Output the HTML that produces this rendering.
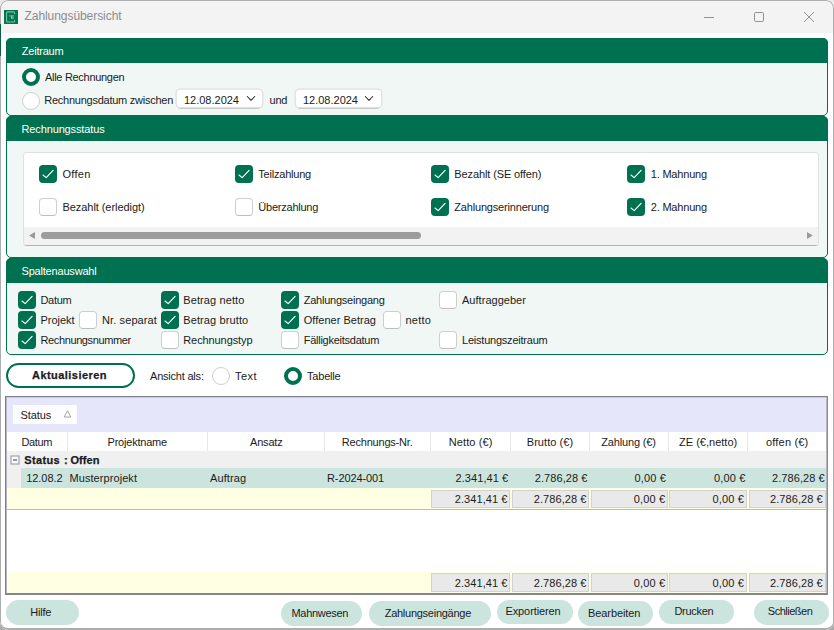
<!DOCTYPE html>
<html lang="de"><head><meta charset="utf-8"><title>Zahlungsübersicht</title>
<style>
html,body{margin:0;padding:0}
body{width:834px;height:630px;overflow:hidden;background:linear-gradient(#e9e9e9 0,#e9e9e9 50%,#a9a9a9 50%,#a9a9a9 100%);position:relative;font-family:"Liberation Sans", sans-serif;color:#1b1b1b}
#w{position:absolute;left:0;top:0;width:834px;height:630px;overflow:hidden;background:#fff;border-radius:8px}
#w div,#w .a,#w .t{position:absolute}
.t{white-space:pre}
.b{-webkit-text-stroke:0.25px #1b1b1b}
.cb{box-sizing:border-box;border:1px solid #cfcfcf;border-bottom-color:#bdbdbd;border-radius:4px;background:#fff}
.cb.on{border:none;background:#007150}
.cb svg{position:absolute;left:0;top:0}
.rd{box-sizing:border-box;border:1px solid #cfcfcf;border-radius:50%;background:#fff}
.rd.on{border:4px solid #007150}
#frame{left:0;top:0;width:834px;height:630px;box-sizing:border-box;border:1px solid #adadad;border-bottom-width:2px;border-radius:8px;pointer-events:none}
</style></head>
<body>
<div id="w">
<div style="left:0px;top:0px;width:834px;height:33px;background:#f3f3f3"></div>
<svg class="a" style="left:4px;top:10px" width="14" height="14" viewBox="0 0 14 14"><rect width="14" height="14" fill="#00774f"/><path d="M10.6 4.2 V2.9 Q10.6 1.9 9.6 1.9 H3.6 Q2.6 1.9 2.6 2.9 V11 Q2.6 12 3.6 12 H9.6 Q10.6 12 10.6 11 V10" fill="none" stroke="#ffffff" stroke-opacity="0.5" stroke-width="1.1"/><path d="M5.2 5.9 H10 M7.8 5.9 V9.2 M7.2 7.9 H10.2" fill="none" stroke="#ffffff" stroke-opacity="0.6" stroke-width="0.9"/></svg>
<svg class="a" style="left:700px;top:8px" width="120" height="18" viewBox="0 0 120 18"><path d="M4 9.5 H14" stroke="#929292" stroke-width="1" fill="none"/><rect x="54.5" y="4.5" width="9" height="9" rx="1.3" fill="none" stroke="#929292" stroke-width="1"/><path d="M104 4 L114 14 M114 4 L104 14" stroke="#929292" stroke-width="1" fill="none"/></svg>
<div style="left:6px;top:38px;width:822px;height:78px;background:#f0f7f5;border:1px solid #007150;border-radius:5px;box-sizing:border-box"></div><div style="left:6px;top:38px;width:822px;height:25px;background:#007150;border-radius:5px 5px 0 0"></div>
<div style="left:6px;top:116px;width:822px;height:142px;background:#f0f7f5;border:1px solid #007150;border-radius:5px;box-sizing:border-box"></div><div style="left:6px;top:116px;width:822px;height:25px;background:#007150;border-radius:5px 5px 0 0"></div>
<div style="left:6px;top:258px;width:822px;height:97px;background:#f0f7f5;border:1px solid #007150;border-radius:5px;box-sizing:border-box"></div><div style="left:6px;top:258px;width:822px;height:25px;background:#007150;border-radius:5px 5px 0 0"></div>
<div class="rd on" style="left:22px;top:68px;width:18px;height:18px;"></div>
<div class="rd" style="left:22px;top:92px;width:18px;height:18px;"></div>
<svg class="a" style="left:173px;top:86px" width="93" height="26" viewBox="0 0 93 26"><rect x="3.10" y="3.1" width="86.70" height="19" rx="4" fill="#fff" stroke="#d6dad9" stroke-width="1"/><path d="M6.60 22.2 H86.30" stroke="#b9bcbb" stroke-width="0.9" fill="none"/></svg>
<svg class="a" style="left:292px;top:86px" width="93" height="26" viewBox="0 0 93 26"><rect x="3.20" y="3.1" width="86.60" height="19" rx="4" fill="#fff" stroke="#d6dad9" stroke-width="1"/><path d="M6.70 22.2 H86.30" stroke="#b9bcbb" stroke-width="0.9" fill="none"/></svg>
<svg class="a" style="left:245.5px;top:95px" width="10" height="7" viewBox="0 0 10 7"><path d="M1.3 1.5 L5 5.3 L8.7 1.5" fill="none" stroke="#2b2b2b" stroke-width="1.05" stroke-linecap="round" stroke-linejoin="round"/></svg>
<svg class="a" style="left:364px;top:95px" width="10" height="7" viewBox="0 0 10 7"><path d="M1.3 1.5 L5 5.3 L8.7 1.5" fill="none" stroke="#2b2b2b" stroke-width="1.05" stroke-linecap="round" stroke-linejoin="round"/></svg>
<div style="left:23px;top:152px;width:796px;height:94px;background:#fff;border:1px solid #dde2e0;border-bottom-color:#b4b4b4;border-radius:4px;box-sizing:border-box"></div>
<div style="left:24px;top:227px;width:794px;height:18px;background:#f2f2f2;border-radius:0 0 3px 3px"></div>
<div style="left:41px;top:232px;width:380px;height:7px;background:#9c9c9c;border-radius:4px"></div>
<svg class="a" style="left:28px;top:231px" width="8" height="9" viewBox="0 0 8 9"><path d="M7 1 V8 L1.2 4.5 Z" fill="#9a9a9a"/></svg>
<svg class="a" style="left:805.5px;top:231px" width="8" height="9" viewBox="0 0 8 9"><path d="M1 1 V8 L6.8 4.5 Z" fill="#9a9a9a"/></svg>
<div class="cb on" style="left:39px;top:165px;width:18px;height:18px;"><svg width="18" height="18" viewBox="0 0 18 18"><path d="M4 10 L7.2 12.6 L14.1 5.4" fill="none" stroke="#fff" stroke-width="1.15" stroke-linecap="round" stroke-linejoin="round"/></svg></div>
<div class="cb" style="left:39px;top:198px;width:18px;height:18px;"></div>
<div class="cb on" style="left:235px;top:165px;width:18px;height:18px;"><svg width="18" height="18" viewBox="0 0 18 18"><path d="M4 10 L7.2 12.6 L14.1 5.4" fill="none" stroke="#fff" stroke-width="1.15" stroke-linecap="round" stroke-linejoin="round"/></svg></div>
<div class="cb" style="left:235px;top:198px;width:18px;height:18px;"></div>
<div class="cb on" style="left:431px;top:165px;width:18px;height:18px;"><svg width="18" height="18" viewBox="0 0 18 18"><path d="M4 10 L7.2 12.6 L14.1 5.4" fill="none" stroke="#fff" stroke-width="1.15" stroke-linecap="round" stroke-linejoin="round"/></svg></div>
<div class="cb on" style="left:431px;top:198px;width:18px;height:18px;"><svg width="18" height="18" viewBox="0 0 18 18"><path d="M4 10 L7.2 12.6 L14.1 5.4" fill="none" stroke="#fff" stroke-width="1.15" stroke-linecap="round" stroke-linejoin="round"/></svg></div>
<div class="cb on" style="left:627px;top:165px;width:18px;height:18px;"><svg width="18" height="18" viewBox="0 0 18 18"><path d="M4 10 L7.2 12.6 L14.1 5.4" fill="none" stroke="#fff" stroke-width="1.15" stroke-linecap="round" stroke-linejoin="round"/></svg></div>
<div class="cb on" style="left:627px;top:198px;width:18px;height:18px;"><svg width="18" height="18" viewBox="0 0 18 18"><path d="M4 10 L7.2 12.6 L14.1 5.4" fill="none" stroke="#fff" stroke-width="1.15" stroke-linecap="round" stroke-linejoin="round"/></svg></div>
<div class="cb on" style="left:18px;top:291px;width:18px;height:18px;"><svg width="18" height="18" viewBox="0 0 18 18"><path d="M4 10 L7.2 12.6 L14.1 5.4" fill="none" stroke="#fff" stroke-width="1.15" stroke-linecap="round" stroke-linejoin="round"/></svg></div>
<div class="cb on" style="left:161px;top:291px;width:18px;height:18px;"><svg width="18" height="18" viewBox="0 0 18 18"><path d="M4 10 L7.2 12.6 L14.1 5.4" fill="none" stroke="#fff" stroke-width="1.15" stroke-linecap="round" stroke-linejoin="round"/></svg></div>
<div class="cb on" style="left:281px;top:291px;width:18px;height:18px;"><svg width="18" height="18" viewBox="0 0 18 18"><path d="M4 10 L7.2 12.6 L14.1 5.4" fill="none" stroke="#fff" stroke-width="1.15" stroke-linecap="round" stroke-linejoin="round"/></svg></div>
<div class="cb" style="left:439px;top:291px;width:18px;height:18px;"></div>
<div class="cb on" style="left:18px;top:311px;width:18px;height:18px;"><svg width="18" height="18" viewBox="0 0 18 18"><path d="M4 10 L7.2 12.6 L14.1 5.4" fill="none" stroke="#fff" stroke-width="1.15" stroke-linecap="round" stroke-linejoin="round"/></svg></div>
<div class="cb on" style="left:161px;top:311px;width:18px;height:18px;"><svg width="18" height="18" viewBox="0 0 18 18"><path d="M4 10 L7.2 12.6 L14.1 5.4" fill="none" stroke="#fff" stroke-width="1.15" stroke-linecap="round" stroke-linejoin="round"/></svg></div>
<div class="cb on" style="left:281px;top:311px;width:18px;height:18px;"><svg width="18" height="18" viewBox="0 0 18 18"><path d="M4 10 L7.2 12.6 L14.1 5.4" fill="none" stroke="#fff" stroke-width="1.15" stroke-linecap="round" stroke-linejoin="round"/></svg></div>
<div class="cb on" style="left:18px;top:331px;width:18px;height:18px;"><svg width="18" height="18" viewBox="0 0 18 18"><path d="M4 10 L7.2 12.6 L14.1 5.4" fill="none" stroke="#fff" stroke-width="1.15" stroke-linecap="round" stroke-linejoin="round"/></svg></div>
<div class="cb" style="left:161px;top:331px;width:18px;height:18px;"></div>
<div class="cb" style="left:281px;top:331px;width:18px;height:18px;"></div>
<div class="cb" style="left:439px;top:331px;width:18px;height:18px;"></div>
<div class="cb" style="left:79px;top:311px;width:18px;height:18px;"></div>
<div class="cb" style="left:383px;top:311px;width:18px;height:18px;"></div>
<div style="left:6px;top:363px;width:129px;height:25px;background:#fff;border:2px solid #007150;border-radius:13px;box-sizing:border-box"></div>
<div class="rd" style="left:212px;top:367px;width:18px;height:18px;"></div>
<div class="rd on" style="left:284px;top:367px;width:18px;height:18px;"></div>
<div style="left:5px;top:396px;width:823px;height:199px;background:#fff"></div>
<div style="left:5px;top:396px;width:823px;height:1px;background:#82828c"></div>
<div style="left:7px;top:397px;width:819px;height:1px;background:#c9c9dc"></div>
<div style="left:5px;top:396px;width:1px;height:199px;background:#7d7d88"></div>
<div style="left:6px;top:397px;width:1px;height:196px;background:#b8b8c6"></div>
<div style="left:5px;top:593px;width:823px;height:2px;background:#85858f"></div>
<div style="left:826px;top:397px;width:1px;height:196px;background:#b4b4bd"></div>
<div style="left:827px;top:396px;width:1px;height:199px;background:#8a8a94"></div>
<div style="left:7px;top:397.5px;width:819px;height:34.5px;background:#e6e6fa"></div>
<div style="left:13px;top:405px;width:64px;height:19px;background:#fdfdff"></div>
<svg class="a" style="left:63px;top:410px" width="9" height="8" viewBox="0 0 9 8"><path d="M4.5 0.8 L7.8 7 H1.2 Z" fill="none" stroke="#9a9a9a" stroke-width="0.9"/></svg>
<div style="left:67.0px;top:432px;width:1.0px;height:19px;background:#e8e8e8"></div>
<div style="left:206.5px;top:432px;width:1.0px;height:19px;background:#e8e8e8"></div>
<div style="left:324.0px;top:432px;width:1.0px;height:19px;background:#e8e8e8"></div>
<div style="left:430.25px;top:432px;width:1.0px;height:19px;background:#e8e8e8"></div>
<div style="left:510.25px;top:432px;width:1.0px;height:19px;background:#e8e8e8"></div>
<div style="left:589.0px;top:432px;width:1.0px;height:19px;background:#e8e8e8"></div>
<div style="left:668.0px;top:432px;width:1.0px;height:19px;background:#e8e8e8"></div>
<div style="left:747.25px;top:432px;width:1.0px;height:19px;background:#e8e8e8"></div>
<div style="left:7px;top:451px;width:819px;height:17px;background:#f0f0f0"></div>
<div style="left:7px;top:468px;width:14px;height:20px;background:#f0f0f0"></div>
<svg class="a" style="left:10px;top:455px" width="10" height="10" viewBox="0 0 10 10"><rect x="1" y="1" width="8" height="8" fill="#fbfbfd" stroke="#8f8fa6" stroke-width="1"/><path d="M3 5 H7" stroke="#2c2c8c" stroke-width="1"/></svg>
<div style="left:21px;top:468px;width:805px;height:20px;background:#cce4de"></div>
<div style="left:7px;top:488px;width:819px;height:21px;background:#ffffe3"></div>
<div style="left:431px;top:489.5px;width:79px;height:18.5px;background:#e9e9e9;border:1px solid #d2d2d2;box-sizing:border-box"></div>
<div style="left:511.5px;top:489.5px;width:77.5px;height:18.5px;background:#e9e9e9;border:1px solid #d2d2d2;box-sizing:border-box"></div>
<div style="left:590.5px;top:489.5px;width:77.0px;height:18.5px;background:#e9e9e9;border:1px solid #d2d2d2;box-sizing:border-box"></div>
<div style="left:669px;top:489.5px;width:78px;height:18.5px;background:#e9e9e9;border:1px solid #d2d2d2;box-sizing:border-box"></div>
<div style="left:748.5px;top:489.5px;width:77.0px;height:18.5px;background:#e9e9e9;border:1px solid #d2d2d2;box-sizing:border-box"></div>
<div style="left:7px;top:572px;width:819px;height:21px;background:#ffffe3"></div>
<div style="left:431px;top:573px;width:79px;height:18.5px;background:#e9e9e9;border:1px solid #d2d2d2;box-sizing:border-box"></div>
<div style="left:511.5px;top:573px;width:77.5px;height:18.5px;background:#e9e9e9;border:1px solid #d2d2d2;box-sizing:border-box"></div>
<div style="left:590.5px;top:573px;width:77.0px;height:18.5px;background:#e9e9e9;border:1px solid #d2d2d2;box-sizing:border-box"></div>
<div style="left:669px;top:573px;width:78px;height:18.5px;background:#e9e9e9;border:1px solid #d2d2d2;box-sizing:border-box"></div>
<div style="left:748.5px;top:573px;width:77.0px;height:18.5px;background:#e9e9e9;border:1px solid #d2d2d2;box-sizing:border-box"></div>
<div style="left:7px;top:508.5px;width:819px;height:1.5px;background:#b9b9b9"></div>
<div style="left:6px;top:600px;width:73px;height:25px;background:#cce4de;border-radius:13px"></div>
<div style="left:281px;top:601px;width:81px;height:25px;background:#cce4de;border-radius:13px"></div>
<div style="left:368.5px;top:601px;width:122.5px;height:25px;background:#cce4de;border-radius:13px"></div>
<div style="left:497px;top:599.5px;width:75.5px;height:24.5px;background:#cce4de;border-radius:13px"></div>
<div style="left:577.5px;top:601px;width:75.5px;height:25px;background:#cce4de;border-radius:13px"></div>
<div style="left:658.5px;top:599.5px;width:75.0px;height:24.5px;background:#cce4de;border-radius:13px"></div>
<div style="left:754px;top:599.5px;width:75px;height:25.0px;background:#cce4de;border-radius:13px"></div>
<span class="t" style="left:24.50px;top:8.00px;line-height:16px;font-size:12px;color:#8c8c8c;letter-spacing:-0.06px;">Zahlungsübersicht</span>
<span class="t" style="left:21.80px;top:43.50px;line-height:15px;font-size:11px;color:#ffffff;letter-spacing:-0.23px;">Zeitraum</span>
<span class="t" style="left:21.50px;top:121.50px;line-height:15px;font-size:11px;color:#ffffff;letter-spacing:-0.13px;">Rechnungsstatus</span>
<span class="t" style="left:21.50px;top:263.50px;line-height:15px;font-size:11px;color:#ffffff;letter-spacing:-0.19px;">Spaltenauswahl</span>
<span class="t" style="left:45.00px;top:69.50px;line-height:15px;font-size:11px;letter-spacing:-0.3px;">Alle Rechnungen</span>
<span class="t" style="left:44.30px;top:93.00px;line-height:15px;font-size:11px;letter-spacing:-0.25px;">Rechnungsdatum zwischen</span>
<span class="t" style="left:184.00px;top:92.50px;line-height:15px;font-size:11px;letter-spacing:-0.01px;">12.08.2024</span>
<span class="t" style="left:269.60px;top:93.00px;line-height:15px;font-size:11px;letter-spacing:-0.32px;">und</span>
<span class="t" style="left:303.00px;top:92.50px;line-height:15px;font-size:11px;letter-spacing:-0.01px;">12.08.2024</span>
<span class="t" style="left:62.50px;top:166.50px;line-height:15px;font-size:11px;letter-spacing:0.26px;">Offen</span>
<span class="t" style="left:62.50px;top:199.50px;line-height:15px;font-size:11px;letter-spacing:-0.06px;">Bezahlt (erledigt)</span>
<span class="t" style="left:258.30px;top:166.50px;line-height:15px;font-size:11px;letter-spacing:-0.21px;">Teilzahlung</span>
<span class="t" style="left:258.30px;top:199.50px;line-height:15px;font-size:11px;letter-spacing:-0.23px;">Überzahlung</span>
<span class="t" style="left:454.30px;top:166.50px;line-height:15px;font-size:11px;letter-spacing:-0.11px;">Bezahlt (SE offen)</span>
<span class="t" style="left:454.30px;top:199.50px;line-height:15px;font-size:11px;letter-spacing:-0.18px;">Zahlungserinnerung</span>
<span class="t" style="left:650.70px;top:166.50px;line-height:15px;font-size:11px;letter-spacing:-0.18px;">1. Mahnung</span>
<span class="t" style="left:650.70px;top:199.50px;line-height:15px;font-size:11px;letter-spacing:-0.18px;">2. Mahnung</span>
<span class="t" style="left:40.50px;top:292.50px;line-height:15px;font-size:11px;letter-spacing:-0.33px;">Datum</span>
<span class="t" style="left:40.50px;top:312.50px;line-height:15px;font-size:11px;letter-spacing:-0.04px;">Projekt</span>
<span class="t" style="left:102.00px;top:312.50px;line-height:15px;font-size:11px;letter-spacing:0.11px;">Nr. separat</span>
<span class="t" style="left:40.50px;top:332.50px;line-height:15px;font-size:11px;letter-spacing:-0.38px;">Rechnungsnummer</span>
<span class="t" style="left:183.25px;top:292.50px;line-height:15px;font-size:11px;letter-spacing:0.11px;">Betrag netto</span>
<span class="t" style="left:183.25px;top:312.50px;line-height:15px;font-size:11px;letter-spacing:0.11px;">Betrag brutto</span>
<span class="t" style="left:183.25px;top:332.50px;line-height:15px;font-size:11px;letter-spacing:-0.09px;">Rechnungstyp</span>
<span class="t" style="left:303.75px;top:292.50px;line-height:15px;font-size:11px;letter-spacing:-0.24px;">Zahlungseingang</span>
<span class="t" style="left:303.75px;top:312.50px;line-height:15px;font-size:11px;letter-spacing:0.02px;">Offener Betrag</span>
<span class="t" style="left:303.75px;top:332.50px;line-height:15px;font-size:11px;letter-spacing:-0.26px;">Fälligkeitsdatum</span>
<span class="t" style="left:405.50px;top:312.50px;line-height:15px;font-size:11px;letter-spacing:0.21px;">netto</span>
<span class="t" style="left:462.00px;top:292.50px;line-height:15px;font-size:11px;letter-spacing:0.03px;">Auftraggeber</span>
<span class="t" style="left:462.00px;top:332.50px;line-height:15px;font-size:11px;letter-spacing:-0.22px;">Leistungszeitraum</span>
<span class="t b" style="left:32.00px;top:367.50px;line-height:15px;font-size:11px;font-weight:700;letter-spacing:0.45px;">Aktualisieren</span>
<span class="t" style="left:150.00px;top:368.50px;line-height:15px;font-size:11px;letter-spacing:-0.21px;">Ansicht als:</span>
<span class="t" style="left:235.00px;top:368.50px;line-height:15px;font-size:11px;letter-spacing:0.45px;">Text</span>
<span class="t" style="left:307.00px;top:368.50px;line-height:15px;font-size:11px;letter-spacing:-0.19px;">Tabelle</span>
<span class="t" style="left:20.50px;top:407.50px;line-height:15px;font-size:11px;letter-spacing:-0.11px;">Status</span>
<span class="t" style="left:21.50px;top:434.50px;line-height:15px;font-size:11px;letter-spacing:-0.38px;">Datum</span>
<span class="t" style="left:107.50px;top:434.50px;line-height:15px;font-size:11px;letter-spacing:-0.21px;">Projektname</span>
<span class="t" style="left:250.00px;top:434.50px;line-height:15px;font-size:11px;letter-spacing:-0.19px;">Ansatz</span>
<span class="t" style="left:341.75px;top:434.50px;line-height:15px;font-size:11px;letter-spacing:-0.2px;">Rechnungs-Nr.</span>
<span class="t" style="left:448.75px;top:434.50px;line-height:15px;font-size:11px;letter-spacing:0.11px;">Netto (€)</span>
<span class="t" style="left:526.75px;top:434.50px;line-height:15px;font-size:11px;letter-spacing:0.06px;">Brutto (€)</span>
<span class="t" style="left:601.30px;top:434.50px;line-height:15px;font-size:11px;letter-spacing:-0.17px;">Zahlung (€)</span>
<span class="t" style="left:679.00px;top:434.50px;line-height:15px;font-size:11px;letter-spacing:0.01px;">ZE (€,netto)</span>
<span class="t" style="left:766.00px;top:434.50px;line-height:15px;font-size:11px;letter-spacing:0.19px;">offen (€)</span>
<span class="t b" style="left:24.30px;top:452.50px;line-height:15px;font-size:11px;font-weight:700;letter-spacing:0.36px;">Status</span>
<span class="t b" style="left:64.00px;top:452.50px;line-height:15px;font-size:11px;font-weight:700;letter-spacing:-0.07px;">:</span>
<span class="t b" style="left:70.50px;top:452.50px;line-height:15px;font-size:11px;font-weight:700;letter-spacing:0.05px;">Offen</span>
<span class="t" style="left:26.25px;top:470.50px;line-height:15px;font-size:11px;letter-spacing:-0.06px;">12.08.2</span>
<span class="t" style="left:69.50px;top:470.50px;line-height:15px;font-size:11px;letter-spacing:0.07px;">Musterprojekt</span>
<span class="t" style="left:210.00px;top:470.50px;line-height:15px;font-size:11px;letter-spacing:0.11px;">Auftrag</span>
<span class="t" style="left:327.00px;top:470.50px;line-height:15px;font-size:11px;letter-spacing:-0.11px;">R-2024-001</span>
<span class="t" style="left:455.50px;top:470.50px;line-height:15px;font-size:11px;letter-spacing:0.07px;">2.341,41 €</span>
<span class="t" style="left:534.75px;top:470.50px;line-height:15px;font-size:11px;letter-spacing:0.07px;">2.786,28 €</span>
<span class="t" style="left:634.50px;top:470.50px;line-height:15px;font-size:11px;letter-spacing:0.15px;">0,00 €</span>
<span class="t" style="left:714.00px;top:470.50px;line-height:15px;font-size:11px;letter-spacing:0.15px;">0,00 €</span>
<span class="t" style="left:772.00px;top:470.50px;line-height:15px;font-size:11px;letter-spacing:0.07px;">2.786,28 €</span>
<span class="t" style="left:454.75px;top:492.00px;line-height:15px;font-size:11px;letter-spacing:0.07px;">2.341,41 €</span>
<span class="t" style="left:533.75px;top:492.00px;line-height:15px;font-size:11px;letter-spacing:0.07px;">2.786,28 €</span>
<span class="t" style="left:633.75px;top:492.00px;line-height:15px;font-size:11px;letter-spacing:0.15px;">0,00 €</span>
<span class="t" style="left:712.50px;top:492.00px;line-height:15px;font-size:11px;letter-spacing:0.15px;">0,00 €</span>
<span class="t" style="left:770.00px;top:492.00px;line-height:15px;font-size:11px;letter-spacing:0.07px;">2.786,28 €</span>
<span class="t" style="left:454.75px;top:575.50px;line-height:15px;font-size:11px;letter-spacing:0.07px;">2.341,41 €</span>
<span class="t" style="left:533.75px;top:575.50px;line-height:15px;font-size:11px;letter-spacing:0.07px;">2.786,28 €</span>
<span class="t" style="left:633.75px;top:575.50px;line-height:15px;font-size:11px;letter-spacing:0.15px;">0,00 €</span>
<span class="t" style="left:712.50px;top:575.50px;line-height:15px;font-size:11px;letter-spacing:0.15px;">0,00 €</span>
<span class="t" style="left:770.00px;top:575.50px;line-height:15px;font-size:11px;letter-spacing:0.07px;">2.786,28 €</span>
<span class="t" style="left:30.20px;top:604.50px;line-height:15px;font-size:11px;letter-spacing:-0.2px;">Hilfe</span>
<span class="t" style="left:291.50px;top:605.50px;line-height:15px;font-size:11px;letter-spacing:-0.31px;">Mahnwesen</span>
<span class="t" style="left:384.70px;top:605.50px;line-height:15px;font-size:11px;letter-spacing:-0.26px;">Zahlungseingänge</span>
<span class="t" style="left:505.50px;top:604.00px;line-height:15px;font-size:11px;letter-spacing:-0.11px;">Exportieren</span>
<span class="t" style="left:588.00px;top:605.50px;line-height:15px;font-size:11px;letter-spacing:-0.08px;">Bearbeiten</span>
<span class="t" style="left:674.40px;top:604.00px;line-height:15px;font-size:11px;letter-spacing:-0.28px;">Drucken</span>
<span class="t" style="left:767.80px;top:604.00px;line-height:15px;font-size:11px;letter-spacing:-0.49px;">Schließen</span>
<div id="frame"></div>
<div style="left:0;top:24px;width:1px;height:32px;background:#0d5c43"></div>
</div>
</body></html>
